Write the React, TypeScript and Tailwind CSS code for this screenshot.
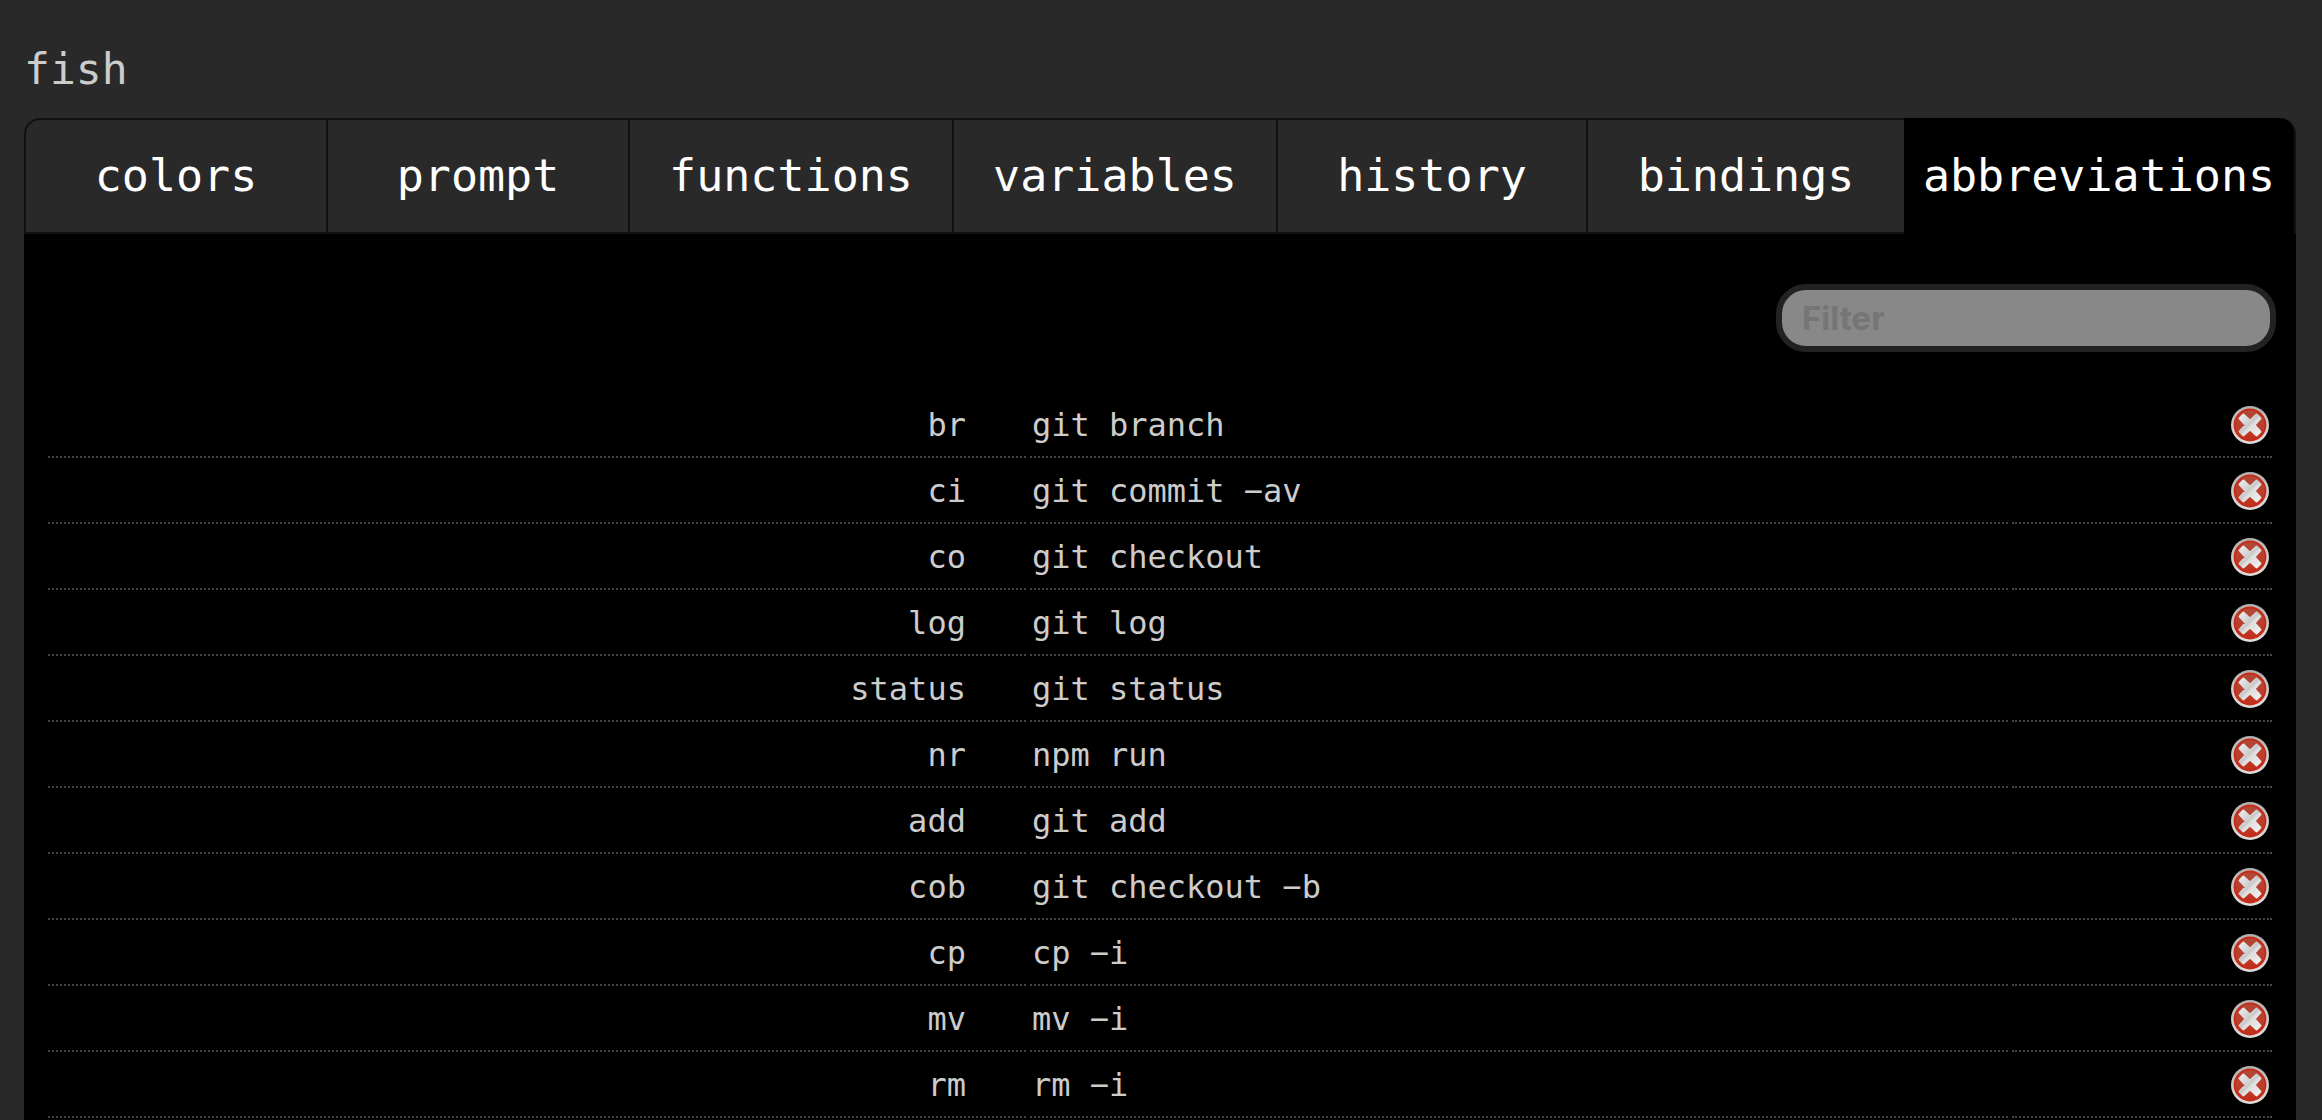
const tabs = [
  { name: 'colors', size: 'grow-[300]' },
  { name: 'prompt', size: 'grow-[300]' },
  { name: 'functions', size: 'grow-[322]' },
  { name: 'variables', size: 'grow-[322]' },
  { name: 'history', size: 'grow-[308]' },
  { name: 'bindings', size: 'grow-[316]' },
  { name: 'abbreviations', size: 'grow-[390]' },
];

const abbreviations = [
  ['br', 'git branch'],
  ['ci', 'git commit −av'],
  ['co', 'git checkout'],
  ['log', 'git log'],
  ['status', 'git status'],
  ['nr', 'npm run'],
  ['add', 'git add'],
  ['cob', 'git checkout −b'],
  ['cp', 'cp −i'],
  ['mv', 'mv −i'],
  ['rm', 'rm −i'],
];

function DeleteIcon() {
  return (
    <svg viewBox="0 0 40 40" className="block size-10" aria-hidden="true">
      <defs>
        <linearGradient id="rim" x1="0" y1="0" x2="0" y2="1">
          <stop offset="0" stopColor="#b0b0b0" />
          <stop offset="0.5" stopColor="#cfcac7" />
          <stop offset="1" stopColor="#dedede" />
        </linearGradient>
        <linearGradient id="disc" x1="0" y1="0" x2="0" y2="1">
          <stop offset="0" stopColor="#b0493b" />
          <stop offset="0.5" stopColor="#bc3f2f" />
          <stop offset="1" stopColor="#c22e1b" />
        </linearGradient>
        <linearGradient id="cross" x1="0" y1="0" x2="1" y2="1">
          <stop offset="0" stopColor="#ececec" />
          <stop offset="0.48" stopColor="#c9c9c9" />
          <stop offset="0.54" stopColor="#dedede" />
          <stop offset="1" stopColor="#f0f0f0" />
        </linearGradient>
      </defs>
      <circle cx="20" cy="20" r="19" fill="url(#rim)" />
      <circle cx="20" cy="20" r="15.5" fill="url(#disc)" stroke="#c42c17" strokeWidth="1.8" />
      <path
        d="M13.4 10 20 16 26.6 10 30 13.4 24 20 30 26.6 26.6 30 20 24 13.4 30 10 26.6 16 20 10 13.4Z"
        fill="url(#cross)"
        stroke="url(#cross)"
        strokeWidth="2.8"
        strokeLinejoin="round"
      />
    </svg>
  );
}

export default function App() {
  return (
    <div className="flex h-screen flex-col overflow-hidden bg-[#292929] pr-[26px] pl-6 font-['DejaVu_Sans_Mono',monospace] text-[#ccc]">
      <h1 className="shrink-0 pt-11 pb-6 text-[43px] leading-[50px]">fish</h1>
      <div className="min-h-0 grow rounded-t-[20px] bg-black">
        <nav className="flex">
          {tabs.map((tab, i) => {
            const active = tab.name === 'abbreviations';
            return (
              <button
                key={tab.name}
                type="button"
                aria-current={active ? 'page' : undefined}
                className={`h-[116px] basis-0 border-[#111] text-[45px] leading-[54px] whitespace-nowrap text-white ${tab.size} ${
                  active ? 'rounded-tr-[16px] border-r-2 bg-black' : 'border-y-2 bg-[#292929]'
                } ${i === 0 ? 'rounded-tl-[16px] border-l-2' : ''} ${i < 5 ? 'border-r-2' : ''}`}
              >
                {tab.name}
              </button>
            );
          })}
        </nav>
        <div className="px-5 pt-[50px]">
          <div className="flex justify-end">
            <input
              type="text"
              aria-label="Filter"
              placeholder="Filter"
              className="h-[68px] w-[500px] rounded-[30px] border-6 border-[#222] bg-[#888] px-5 font-['Inter',sans-serif] text-[33px] font-bold text-black placeholder:text-[#757575]"
            />
          </div>
          <table className="mt-10 w-full table-fixed border-separate border-spacing-x-1 border-spacing-y-1">
            <colgroup>
              <col className="w-[44.13%]" />
              <col className="w-[44.13%]" />
              <col />
            </colgroup>
            <tbody>
              {abbreviations.map(([word, phrase]) => (
                <tr key={word} className="text-[32px] leading-[38px]">
                  <td className="h-[62px] border-b-2 border-dotted border-[#444] pr-[60px] pb-0.5 text-right">{word}</td>
                  <td className="border-b-2 border-dotted border-[#444] pb-0.5 pl-0.5">{phrase}</td>
                  <td className="border-b-2 border-dotted border-[#444] pb-0.5">
                    <button type="button" aria-label={`Delete ${word}`} className="ml-auto block pr-0.5">
                      <DeleteIcon />
                    </button>
                  </td>
                </tr>
              ))}
            </tbody>
          </table>
        </div>
      </div>
    </div>
  );
}
